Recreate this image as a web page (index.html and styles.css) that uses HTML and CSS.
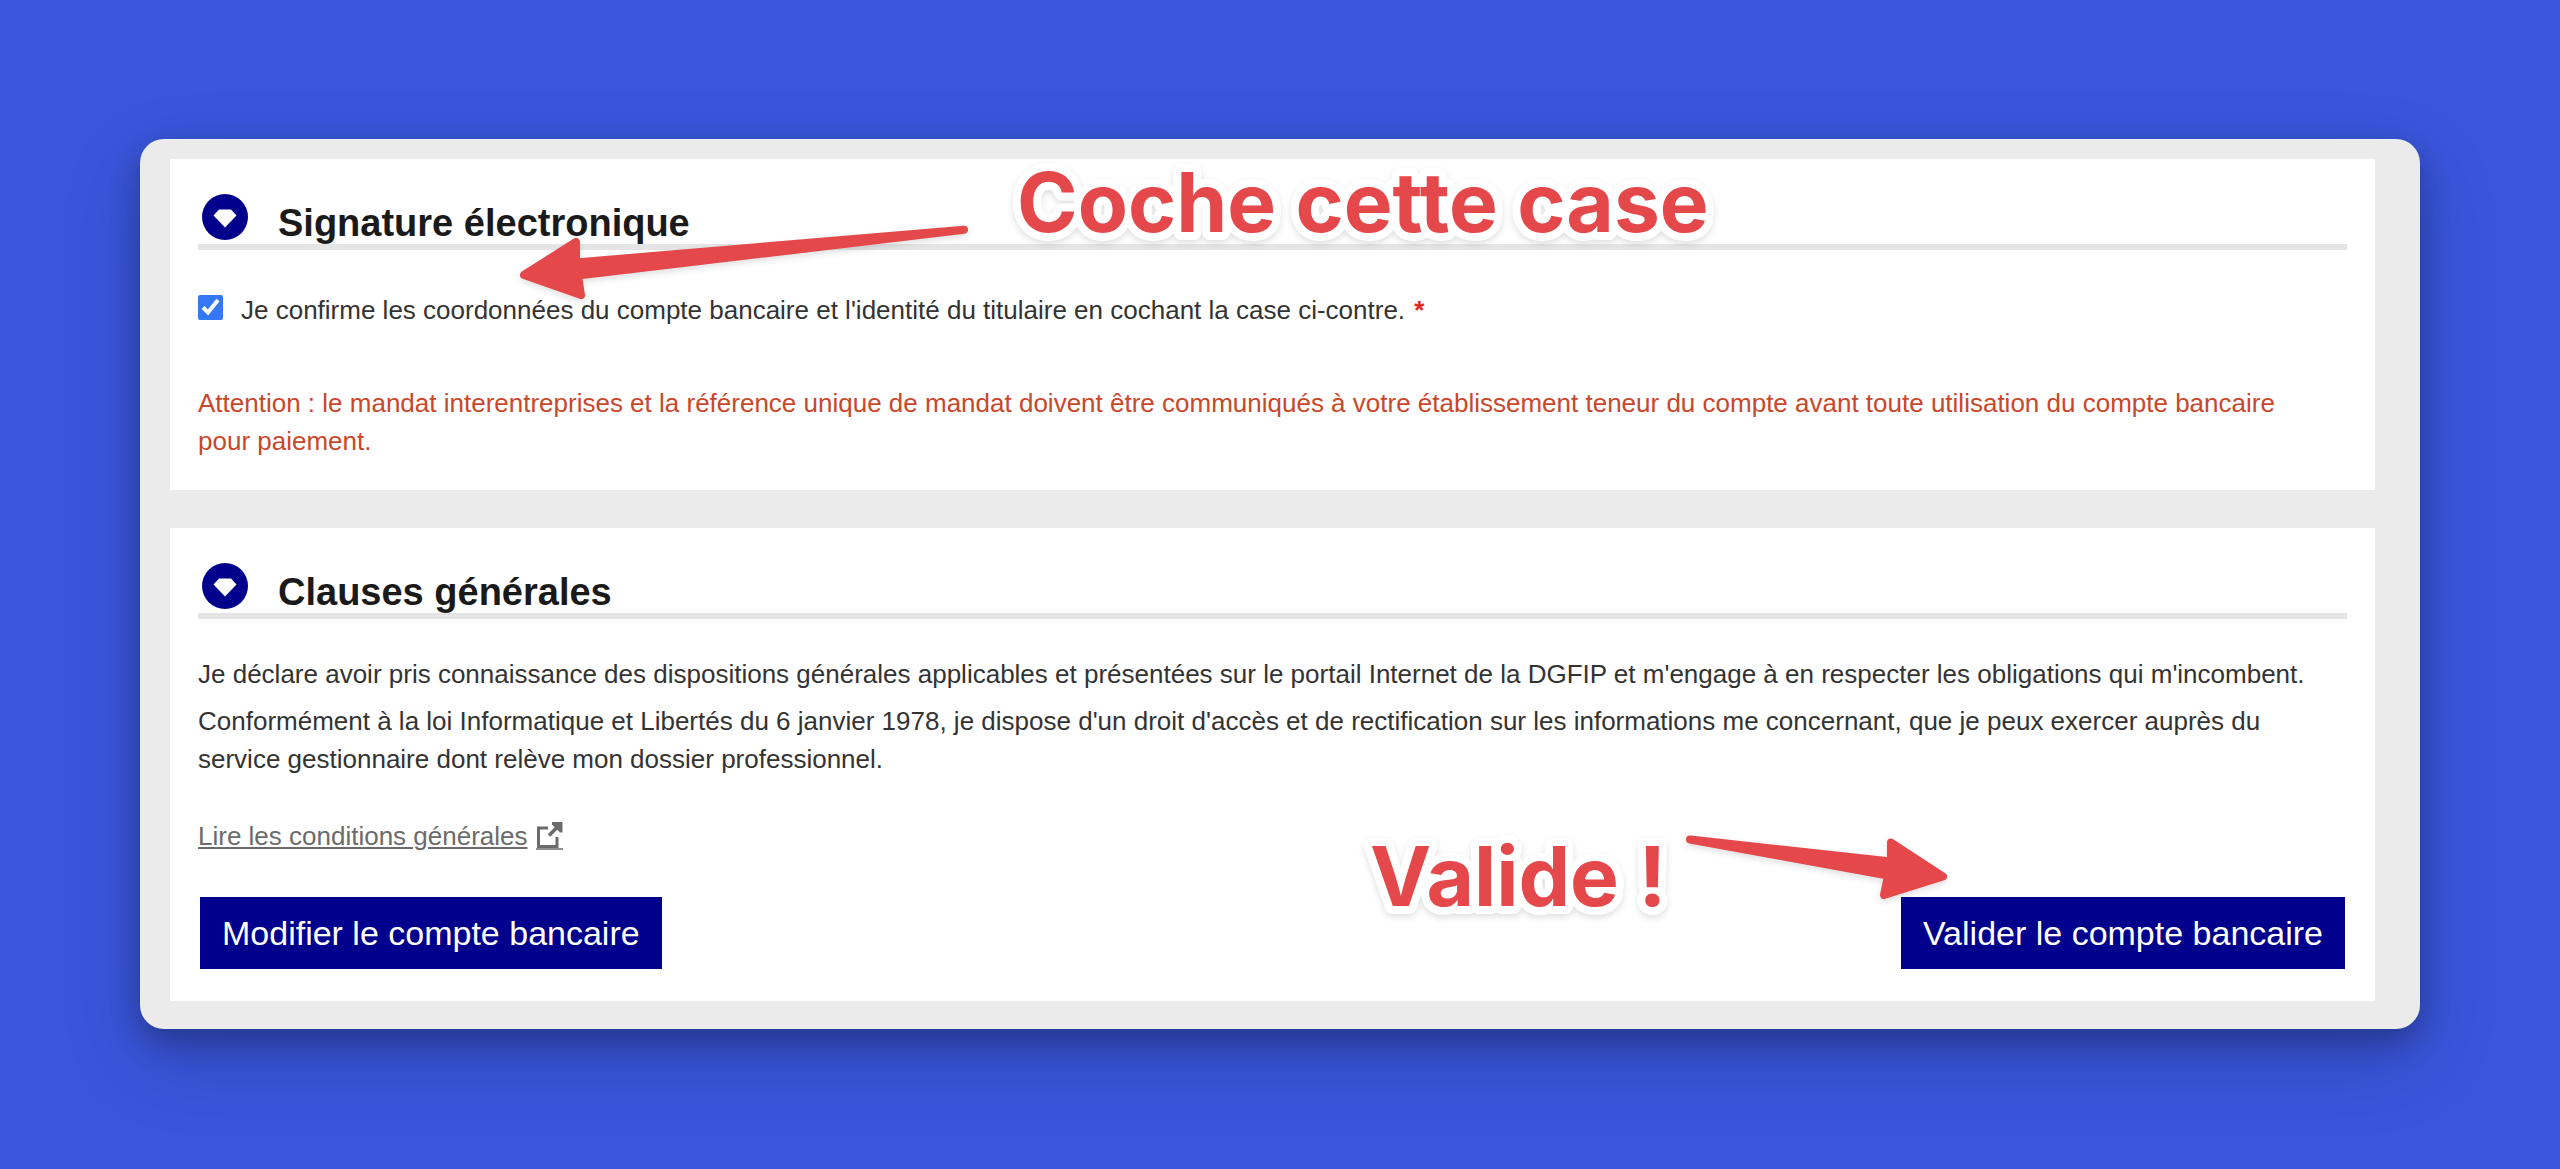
FILE: index.html
```html
<!DOCTYPE html>
<html lang="fr">
<head>
    <meta charset="UTF-8">
    <meta name="viewport" content="width=device-width, initial-scale=1.0">
    <title>Validation du compte bancaire</title>
    <link rel="stylesheet" href="styles.css">
</head>
<body>
    <main class="window">
        <section class="panel">
            <h2 class="panel-title">
                <svg class="panel-icon" viewBox="0 0 46 46" aria-hidden="true">
                    <circle cx="23" cy="23" r="23" fill="#00008c"/>
                    <path d="M17 15.500h12l5.500 6L23 33.500l-11.500-12z" fill="#fff"/>
                </svg>
                <span>Signature électronique</span>
            </h2>
            <div class="confirm">
                <input type="checkbox" id="confirm" checked>
                <label for="confirm">Je confirme les coordonnées du compte bancaire et l'identité du titulaire en cochant la case ci-contre. <span class="required">*</span></label>
            </div>
            <p class="warning">Attention : le mandat interentreprises et la référence unique de mandat doivent être communiqués à votre établissement teneur du compte avant toute utilisation du compte bancaire pour paiement.</p>
        </section>

        <section class="panel">
            <h2 class="panel-title">
                <svg class="panel-icon" viewBox="0 0 46 46" aria-hidden="true">
                    <circle cx="23" cy="23" r="23" fill="#00008c"/>
                    <path d="M17 15.500h12l5.500 6L23 33.500l-11.500-12z" fill="#fff"/>
                </svg>
                <span>Clauses générales</span>
            </h2>
            <div class="clauses">
                <p>Je déclare avoir pris connaissance des dispositions générales applicables et présentées sur le portail Internet de la DGFIP et m'engage à en respecter les obligations qui m'incombent.</p>
                <p>Conformément à la loi Informatique et Libertés du 6 janvier 1978, je dispose d'un droit d'accès et de rectification sur les informations me concernant, que je peux exercer auprès du service gestionnaire dont relève mon dossier professionnel.</p>
            </div>
            <a class="terms" href="#conditions">
                <span>Lire les conditions générales</span>
                <svg class="terms-icon" viewBox="0 0 27 28" aria-hidden="true">
                    <path d="M12 6H2.500V24.500H21V15" fill="none" stroke="#6b6b6b" stroke-width="3"/>
                    <path d="M13 13.500L23 3.500" fill="none" stroke="#6b6b6b" stroke-width="3.500"/>
                    <path d="M16 0H26.500V10.500H24L16 2.500z" fill="#6b6b6b"/>
                    <path d="M0 27h27" stroke="#6b6b6b" stroke-width="1.500"/>
                </svg>
            </a>
            <div class="actions">
                <button type="button">Modifier le compte bancaire</button>
                <button type="button">Valider le compte bancaire</button>
            </div>
        </section>

        <!-- annotations -->
        <svg class="note note-check" viewBox="0 0 700 100">
            <text x="0" y="80">Coche cette case</text>
        </svg>
        <svg class="arrow arrow-check" viewBox="0 0 450 64" aria-hidden="true">
            <path d="M5 37L57 4V24.500L445 -8.300L59 37.500L62 57z"/>
        </svg>
        <svg class="note note-submit" viewBox="0 0 300 100">
            <text x="0" y="80">Valide !</text>
        </svg>
        <svg class="arrow arrow-submit" viewBox="0 0 262 64" aria-hidden="true">
            <path d="M4 4.500L205 26.500V7.500L257 41.500L198 60L202 40.500z"/>
        </svg>
    </main>
</body>
</html>
```
FILE: styles.css
```css
* {
    box-sizing: border-box;
}
body {
    margin: 0;
    padding: 139px 140px 140px;
    min-height: 100vh;
    background-color: #3a56dc;
    font-family: "Liberation Sans", Arial, sans-serif;
    font-size: 26px;
    line-height: 38px;
    color: #333;
}
p, h2 {
    margin: 0;
}
.window {
    position: relative;
    display: flex;
    flex-direction: column;
    gap: 38px;
    padding: 20px 45px 28px 30px;
    background-color: #ebebeb;
    border-radius: 24px;
    box-shadow: 0 30px 80px rgba(0, 0, 0, 0.18), 0 12px 30px rgba(0, 0, 0, 0.25);
}
.panel {
    padding: 35px 28px 30px;
    background-color: #fff;
}
.panel-title {
    display: flex;
    align-items: flex-end;
    gap: 30px;
    height: 56px;
    padding-left: 4px;
    border-bottom: 6px solid #e5e5e5;
    font-size: 38px;
    line-height: 42px;
    color: #1a1a1a;
}
.panel-icon {
    width: 46px;
    height: 46px;
    align-self: flex-start;
}
.confirm {
    display: flex;
    align-items: center;
    gap: 18px;
    margin: 41px 0 55px;
}
.confirm input {
    width: 25px;
    height: 25px;
    margin: 0 0 6px;
    accent-color: #3478f6;
}
.required {
    margin-left: 2px;
    font-weight: bold;
    color: #e1261c;
}
.warning {
    padding-right: 30px;
    color: #c9472b;
}
.clauses {
    display: flex;
    flex-direction: column;
    gap: 9px;
    margin: 36px 0 39px;
}
.terms {
    display: inline-flex;
    align-items: center;
    gap: 8px;
    color: #6b6b6b;
}
.terms-icon {
    width: 27px;
    height: 28px;
}
.actions {
    display: flex;
    justify-content: space-between;
    margin: 42px 2px 2px;
}
.actions button {
    height: 72px;
    padding: 0 22px;
    border: none;
    background-color: #00008c;
    font-family: inherit;
    font-size: 34px;
    color: #fff;
    cursor: pointer;
}
.note {
    position: absolute;
    height: 100px;
    overflow: visible;
    font-family: Inter, sans-serif;
    font-size: 82px;
    font-weight: 700;
    fill: #e5484b;
    stroke: #fff;
    stroke-width: 16px;
    stroke-linejoin: round;
    paint-order: stroke;
    filter: drop-shadow(0 3px 3px rgba(0, 0, 0, 0.12));
}
.note-check {
    top: 13px;
    left: 877px;
    width: 700px;
}
.note-submit {
    top: 687px;
    left: 1230px;
    width: 300px;
}
.arrow {
    position: absolute;
    overflow: visible;
    fill: #e5484b;
    stroke: #e5484b;
    stroke-width: 8px;
    stroke-linejoin: round;
    filter: drop-shadow(0 3px 3px rgba(0, 0, 0, 0.12));
}
.arrow-check {
    top: 99px;
    left: 379px;
    width: 450px;
    height: 64px;
}
.arrow-submit {
    top: 696px;
    left: 1546px;
    width: 262px;
    height: 64px;
}
```
